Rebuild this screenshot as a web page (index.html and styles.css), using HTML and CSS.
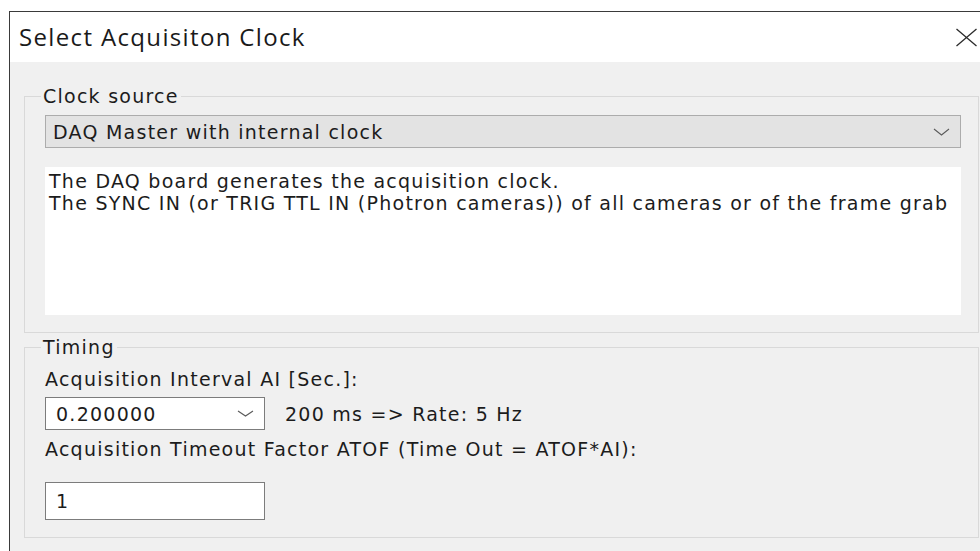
FILE: index.html
```html
<!DOCTYPE html>
<html lang="en">
<head>
<meta charset="utf-8">
<title>Select Acquisiton Clock</title>
<link rel="stylesheet" href="styles.css">
</head>
<body>
<div class="window">
  <div class="titlebar">
    <span class="title">Select Acquisiton Clock</span>
    <svg class="close" width="23" height="19" viewBox="0 0 23 19" aria-hidden="true">
      <path d="M1.5 1 L21.5 18 M21.5 1 L1.5 18" stroke="#2b2b2b" stroke-width="1.3" fill="none"/>
    </svg>
  </div>
  <div class="client">
    <fieldset class="group group-source">
      <legend>Clock source</legend>
      <div class="combo combo-wide">
        <span>DAQ Master with internal clock</span>
        <svg class="chevron" width="17" height="8" viewBox="0 0 17 8" aria-hidden="true">
          <path d="M1 1 L8.5 7 L16 1" stroke="#5a5a5a" stroke-width="1.1" fill="none"/>
        </svg>
      </div>
      <div class="memo">The DAQ board generates the acquisition clock.<br>The SYNC IN (or TRIG TTL IN (Photron cameras)) of all cameras or of the frame grab</div>
    </fieldset>
    <fieldset class="group group-timing">
      <legend>Timing</legend>
      <div class="field-label">Acquisition Interval AI [Sec.]:</div>
      <div class="row">
        <div class="combo combo-small">
          <span>0.200000</span>
          <svg class="chevron" width="17" height="7" viewBox="0 0 17 7" aria-hidden="true">
            <path d="M1 1 L8.5 6 L16 1" stroke="#5a5a5a" stroke-width="1.1" fill="none"/>
          </svg>
        </div>
        <span class="rate">200 ms =&gt; Rate: 5 Hz</span>
      </div>
      <div class="field-label label-timeout">Acquisition Timeout Factor ATOF (Time Out = ATOF*AI):</div>
      <div class="edit">1</div>
    </fieldset>
  </div>
</div>
</body>
</html>
```
FILE: styles.css
```css
html, body {
  margin: 0;
  padding: 0;
  background: #ffffff;
  overflow: hidden;
}

body {
  width: 980px;
  height: 551px;
  padding: 11px 0 0 9px;
  box-sizing: border-box;
  font-family: "DejaVu Sans", Verdana, sans-serif;
  font-size: 19px;
  letter-spacing: 1.25px;
  line-height: 22px;
  color: #1c1c1c;
}

.window {
  width: 970px;
  height: 560px;
  border-left: 1px solid #3a3a3a;
  border-top: 1px solid #3a3a3a;
  background: #f0f0f0;
}

/* caption bar */
.titlebar {
  height: 50px;
  background: #ffffff;
  display: flex;
  align-items: center;
  justify-content: space-between;
  padding: 0 2px 0 9px;
}

.title {
  font-family: "Open Sans", "Noto Sans", sans-serif;
  font-size: 24px;
  letter-spacing: 1.35px;
  line-height: 30px;
  color: #1a1a1a;
}

.close {
  display: block;
}

/* dialog body */
.client {
  padding: 23px 1px 0 14px;
}

.group {
  margin: 0;
  border: 1px solid #d9d9d9;
  padding: 8px 17px 17px 20px;
}

.group legend {
  padding: 0 2px;
  margin-left: -4px;
  line-height: 22px;
}

.group-timing {
  margin-top: 3px;
  padding-top: 10px;
  padding-bottom: 17px;
}

.combo {
  display: flex;
  align-items: center;
  justify-content: space-between;
  box-sizing: border-box;
  height: 33px;
}

.combo-wide {
  background: #e3e3e3;
  border: 1px solid #acacac;
  padding: 0 10px 0 7px;
}

.combo-small {
  width: 220px;
  background: #ffffff;
  border: 1px solid #7c7c7c;
  padding: 0 10px 0 10px;
}

.memo {
  margin-top: 19px;
  height: 148px;
  box-sizing: border-box;
  background: #ffffff;
  padding: 3px 0 0 4px;
  white-space: nowrap;
  overflow: hidden;
}

.field-label {
  white-space: nowrap;
}

.row {
  display: flex;
  align-items: center;
  gap: 20px;
  margin-top: 7px;
}

.label-timeout {
  margin-top: 8px;
}

.edit {
  margin-top: 22px;
  width: 220px;
  height: 38px;
  box-sizing: border-box;
  background: #ffffff;
  border: 1px solid #7c7c7c;
  padding: 0 10px;
  display: flex;
  align-items: center;
}
```
